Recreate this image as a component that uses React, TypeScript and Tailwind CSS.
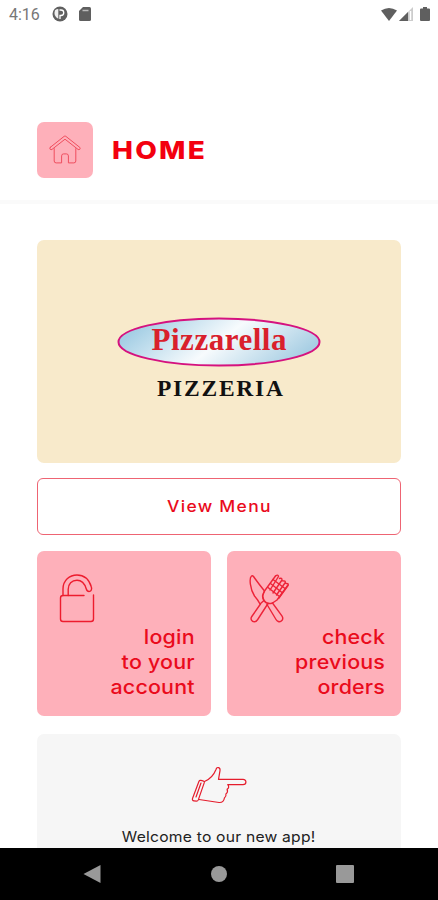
import React, { ReactNode } from 'react';

const HomeIcon = () => (
  <svg className="h-8 w-8" viewBox="0 0 32 32" fill="none" stroke="#ef4e5e" strokeWidth={1} strokeLinejoin="round" strokeLinecap="round">
    <path d="M1.2 13.4 15.2 2.3q.8-.6 1.6 0L30.8 13.4q.8.8 0 1.9-.8.8-1.8.1L16 5.2 3 15.4q-1 .7-1.8-.1-.8-1.1 0-1.9Z" />
    <path d="M5.2 14.6V27q0 1.9 2 1.9h5.4v-7q0-2 2-2h2.8q2 0 2 2v7h5.4q2 0 2-1.9V14.6" />
  </svg>
);

const LockIcon = () => (
  <svg className="h-[52px] w-[40px]" viewBox="0 0 40 52" fill="none" stroke="#ed1c2e" strokeWidth={1.4} strokeLinejoin="round" strokeLinecap="round">
    <path d="M27 23.5H6q-2.5 0-2.5 2.5v21q0 2.5 2.5 2.5h28q2.5 0 2.5-2.5V23" />
    <path d="M6 23.5V17C6 8.5 12.500 3 20 3c7 0 12 4.500 14.300 11.700.9 2.600-.3 4.500-1.700 4.700-1.800.3-2.800-.8-3.400-2.700C27.500 11 24.500 8.200 20 8.200c-5.300 0-8.800 4-8.800 9v6.300" />
  </svg>
);

const CutleryIcon = () => (
  <svg className="h-[52px] w-[44px]" viewBox="0 0 44 52" fill="none" stroke="#ed2338" strokeWidth={1.4} strokeLinejoin="round" strokeLinecap="round">
    <path d="M4.500 4C2 6 3 17 7.500 24q3.500 4 5.500 8L17 28.500 15.500 24l2-5Q11 11 6.500 4.500 5.500 3.300 4.500 4Z" />
    <path d="M13.500 32 4.800 44.500c-1.800 2.500.1 5.400 2.700 5.200 1.500 0 2.400-1 3.200-2.200L21 31.500" />
    <path d="M20 32.500 29 47.500c1.200 2 3.300 2.800 5.100 1.700 1.800-1.200 2-3.400.8-5.300L25.500 31" />
    <path d="M28.500 4 17.500 19q-3 5-1 9 3.500 5 9 3l4.500-3L41 13" />
    <path d="M28.500 4q2.500-2 3 .5L23 18M32.500 6.500q2.500-1 2.500 1.500l-9 13M36 9q2.500-.6 2.300 1.500L29.500 23M39 11.500q3-.3 2 2L32 26" />
    <path d="m26 7.500 12 9M23.500 11.500l11.500 9M21 15.500l11.500 9" />
  </svg>
);

const HandIcon = () => (
  <svg className="h-[40px] w-[56px]" viewBox="0 0 56 40" fill="none" stroke="#e51d2d" strokeWidth={1.200} strokeLinejoin="round" strokeLinecap="round">
    <path d="M13.500 16.500C19.500 14 23 9.500 25 4.500c1-3.500 4.500-2 4 1.200l-1.500 8.700H52c4 0 3.800 5.300 0 5.300H36.700c1.700 2 1 3.300-.6 4.600 1 2.300.2 3.700-1.200 4.700.5 1.900-.4 3.200-1.500 4-.5 3.600-2.400 4.700-5.400 4.500L8 34.500" />
    <path d="m8 16.200-6.500 17.300q-.5 2 1.500 2.300l2.500.4q1.300 0 1.800-1.300l5.900-17q.5-1.700-1.300-2.100l-2-.4q-1.400-.3-1.900.8Z" />
    <path d="m5 32 5-14" />
  </svg>
);

const StatusBar = () => (
  <div className="flex h-7 shrink-0 items-center justify-between pl-[9px] pr-[8px] text-[#5f5f5f]">
    <div className="flex items-center">
      <span className="w-[43px] pt-px font-[Roboto,sans-serif] text-[16px] leading-none text-[#777]">4:16</span>
      <svg className="h-4 w-4" viewBox="0 0 16 16">
        <circle cx="8" cy="8" r="7.500" fill="currentColor" />
        <path d="M3 4.200Q4.500 3 6.300 3v9.800Q1 10 3 4.200Z" fill="#eee" />
        <path d="M7.500 4H9a2.600 2.600 0 0 1 0 5.500H8V13" fill="none" stroke="#fff" strokeWidth="1.300" />
      </svg>
      <svg className="ml-[11px] h-[14px] w-[12px]" viewBox="0 0 12 14">
        <path d="M4 0h6.500Q12 0 12 1.500v11q0 1.500-1.500 1.500h-9Q0 14 0 12.500V4Z" fill="currentColor" />
        <path d="M3.500 3.500h6" stroke="#bbb" strokeWidth="1.500" />
      </svg>
    </div>
    <div className="flex items-center">
      <svg className="h-[13px] w-4" viewBox="0 0 16 13">
        <path d="M0 2.500q8-5 16 0L8 13Z" fill="currentColor" />
      </svg>
      <svg className="ml-[2px] h-[14px] w-[14px]" viewBox="0 0 14 14">
        <path d="M14 0v14H0Z" fill="#ccc" />
        <path d="M9 5v9H0Z" fill="currentColor" />
        <path d="M11.500 4v9" stroke="#fff" strokeWidth="1.500" />
      </svg>
      <svg className="ml-[7px] h-[14px] w-[10px]" viewBox="0 0 10 14">
        <path d="M3 0h4v1.500h2q1 0 1 1V13q0 1-1 1H1q-1 0-1-1V2.500q0-1 1-1h2Z" fill="currentColor" />
      </svg>
    </div>
  </div>
);

const Logo = () => (
  <svg className="mt-[18px] h-[90px] w-[206px]" viewBox="0 0 206 90">
    <defs>
      <linearGradient id="oval" x1="0" y1="0.35" x2="1" y2="0.65">
        <stop offset="0.05" stopColor="#a5cfe5" />
        <stop offset="0.5" stopColor="#f7fbfd" />
        <stop offset="0.95" stopColor="#a9cfe4" />
      </linearGradient>
    </defs>
    <ellipse cx="103" cy="26" rx="100.500" ry="23.500" fill="url(#oval)" stroke="#d5127f" strokeWidth="2" />
    <text x="103" y="34" textAnchor="middle" textLength="135" fontFamily="Liberation Serif, serif" fontWeight="700" fontSize="31" fill="#d9202c">Pizzarella</text>
    <text x="41" y="80" textLength="126" fontFamily="Liberation Serif, serif" fontWeight="700" fontSize="23.500" fill="#111">PIZZERIA</text>
  </svg>
);

const ActionCard: React.FC<{ icon: ReactNode; children: ReactNode }> = ({ icon, children }) => (
  <button className="flex h-[165px] flex-1 flex-col items-start rounded-[7px] bg-[#feb0ba] pl-[20px] pr-[16px] pt-[21px]">
    {icon}
    <span className="mt-px origin-right scale-x-[1.07] self-end text-right text-[20px] font-medium leading-[25px] tracking-[0.2px] text-[#ea0b1c]">
      {children}
    </span>
  </button>
);

const NavBar = () => (
  <nav className="flex h-[52px] shrink-0 items-center justify-between bg-black pl-[83px] pr-[84px]">
    <svg className="h-5 w-[18px]" viewBox="0 0 18 20"><path d="M17.500 1v18L.5 10Z" fill="#999" /></svg>
    <span className="h-4 w-4 rounded-full bg-[#999]" />
    <span className="h-[18px] w-[18px] rounded-[1px] bg-[#999]" />
  </nav>
);

const App: React.FC = () => {
  return (
    <div className="flex h-[900px] w-[438px] flex-col overflow-hidden bg-white font-[Inter,sans-serif]">
      <StatusBar />
      <header className="flex h-[176px] shrink-0 items-start border-b-4 border-[#fafafa] pl-[37px] pt-[94px]">
        <div className="flex h-14 w-14 items-center justify-center rounded-[7px] bg-[#feb0ba]">
          <HomeIcon />
        </div>
        <h1 className="ml-[19px] origin-left scale-x-[1.12] text-[25px] font-extrabold leading-[56px] tracking-[2px] text-[#f3000f]">HOME</h1>
      </header>

      <main className="flex min-h-0 flex-1 flex-col overflow-hidden px-[37px] pt-9">
        <div className="flex h-[223px] shrink-0 items-center justify-center rounded-[7px] bg-[#f8eacb]">
          <Logo />
        </div>
        <button className="mt-[15px] h-[57px] shrink-0 rounded-[6px] border border-[#ee6473] text-[#ea0b1c]">
          <span className="inline-block scale-x-[1.06] text-[16.5px] font-medium tracking-[1.2px]">View Menu</span>
        </button>
        <div className="mt-4 flex shrink-0 gap-4">
          <ActionCard icon={<LockIcon />}>login<br />to your<br />account</ActionCard>
          <ActionCard icon={<CutleryIcon />}>check<br />previous<br />orders</ActionCard>
        </div>
        <div className="mt-[18px] flex h-[160px] shrink-0 flex-col items-center rounded-[7px] bg-[#f6f6f6] pt-[31px]">
          <HandIcon />
          <p className="mt-[22px] scale-x-[1.08] text-[14.5px] leading-[20px] tracking-[0.2px] text-[#222]">Welcome to our new app!</p>
        </div>
      </main>
      <NavBar />
    </div>
  );
};

export default App;
